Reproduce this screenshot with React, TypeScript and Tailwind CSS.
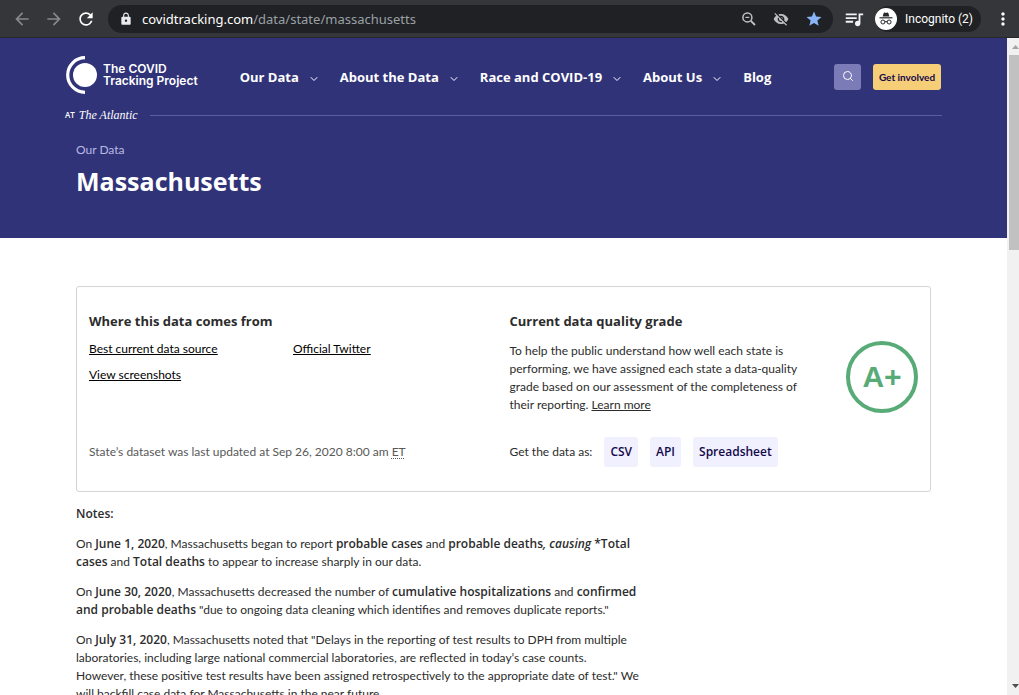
import type { ReactNode } from "react";
import {
  MdArrowBack,
  MdArrowForward,
  MdRefresh,
  MdLock,
  MdStar,
  MdMoreVert,
  MdVisibilityOff,
  MdQueueMusic,
} from "react-icons/md";
import { ChevronDown, Search } from "lucide-react";

function IncognitoIcon() {
  return (
    <svg viewBox="0 0 22 22" className="size-[22px] shrink-0" aria-hidden="true">
      <circle cx="11" cy="11" r="11" fill="#fff" />
      <path d="M7.6 8.6 8.7 5.1q.3-.8 1.1-.5l1.2.4 1.2-.4q.8-.3 1.1.5l1.1 3.5z" fill="#27282b" />
      <rect x="4.5" y="9.2" width="13" height="1.2" fill="#27282b" />
      <g fill="none" stroke="#27282b" strokeWidth="1">
        <circle cx="7.9" cy="14" r="2" />
        <circle cx="14.1" cy="14" r="2" />
        <path d="M9.9 13.9q1.1-.7 2.2 0" />
      </g>
    </svg>
  );
}

function ZoomOutIcon() {
  return (
    <svg viewBox="0 0 16 16" className="size-4" fill="none" stroke="currentColor" aria-hidden="true">
      <circle cx="6.4" cy="6.4" r="4.5" strokeWidth="1.5" />
      <path d="M9.8 9.8 14 14" strokeWidth="1.9" />
      <path d="M4.4 6.4h4" strokeWidth="1.2" />
    </svg>
  );
}

function BrowserBar() {
  return (
    <div className="flex h-[38px] shrink-0 items-center border-b border-[#28282c] bg-[#35363a] pr-1.5 pl-3 text-white">
      <button type="button" aria-label="Back" className="mr-3 text-[#87888b]">
        <MdArrowBack size={20} />
      </button>
      <button type="button" aria-label="Forward" className="mr-3 text-[#87888b]">
        <MdArrowForward size={20} />
      </button>
      <button type="button" aria-label="Reload" className="mr-3">
        <MdRefresh size={20} />
      </button>
      <div className="flex h-7 flex-1 items-center rounded-full bg-[#202124] pr-2.5 pl-[11px]">
        <MdLock size={14} className="mr-[9px] shrink-0 text-[#e8eaed]" />
        <span className="flex-1 font-['Noto_Sans',sans-serif] text-[13px] text-[#9aa0a6]">
          <span className="text-white">covidtracking.com</span>/data/state/massachusetts
        </span>
        <div className="flex items-center gap-4 text-[#bdc1c6]">
          <button type="button" aria-label="Zoom">
            <ZoomOutIcon />
          </button>
          <button type="button" aria-label="Third-party cookies blocked">
            <MdVisibilityOff size={16} />
          </button>
          <button type="button" aria-label="Bookmark this tab" className="text-[#8ab4f8]">
            <MdStar size={18} />
          </button>
        </div>
      </div>
      <button type="button" aria-label="Media controls" className="mr-2.5 ml-2.5 text-[#f1f3f4]">
        <MdQueueMusic size={22} />
      </button>
      <div className="mr-3 flex h-[26px] items-center gap-2 rounded-full bg-[#202124] pr-2">
        <IncognitoIcon />
        <span className="font-['Roboto',sans-serif] text-[12px] whitespace-nowrap">Incognito (2)</span>
      </div>
      <button type="button" aria-label="Menu">
        <MdMoreVert size={20} />
      </button>
    </div>
  );
}

function Logo() {
  return (
    <a href="#home" className="flex items-center gap-1.5">
      <svg viewBox="0 0 32 38" className="h-[38px] w-8" aria-hidden="true">
        <circle cx="20" cy="19" r="12" fill="#fff" />
        <path d="M20 1.7A17.3 17.3 0 0 0 20 36.3" fill="none" stroke="#fff" strokeWidth="3.2" />
      </svg>
      <span className="font-['Inter',sans-serif] text-[12px] leading-3 font-semibold whitespace-nowrap text-white">
        The COVID
        <br />
        Tracking Project
      </span>
    </a>
  );
}

const navItems = [
  { label: "Our Data", menu: true },
  { label: "About the Data", menu: true },
  { label: "Race and COVID-19", menu: true },
  { label: "About Us", menu: true },
  { label: "Blog", menu: false },
];

function SiteHeader() {
  return (
    <header className="h-[200px] bg-[#313379] font-['Open_Sans',sans-serif] text-white">
      <div className="px-[65px] pt-[18px]">
        <div className="flex items-center">
          <Logo />
          <nav className="ml-[42px] flex items-center gap-5 pt-1 text-[13px] font-bold whitespace-nowrap">
            {navItems.map((item) =>
              item.menu ? (
                <button key={item.label} type="button" className="flex items-center gap-[9px]">
                  {item.label}
                  <ChevronDown size={12} strokeWidth={2} className="mt-1" />
                </button>
              ) : (
                <a key={item.label} href="#blog">
                  {item.label}
                </a>
              ),
            )}
          </nav>
          <div className="mr-px ml-auto flex items-center gap-3 pt-1">
            <button
              type="button"
              aria-label="Search"
              className="flex h-[26px] w-[27px] items-center justify-center rounded-[3px] bg-[#7b7bb8] pb-0.5"
            >
              <Search size={12} strokeWidth={2} />
            </button>
            <a
              href="#get-involved"
              className="flex h-[26px] w-[68px] items-center justify-center rounded-[3px] bg-[#f6ce78] font-['Lato',sans-serif] text-[10px] font-bold whitespace-nowrap text-[#13094a]"
            >
              Get involved
            </a>
          </div>
        </div>
        <div className="mt-3 flex h-[18px] items-center">
          <span className="text-[8px] font-semibold">AT</span>
          <span className="ml-1 font-['Liberation_Serif',serif] text-[12px] italic">The Atlantic</span>
          <span className="ml-3 h-px flex-1 bg-[#5b5d9c]" />
        </div>
      </div>
      <div className="px-[76px] pt-[17px]">
        <a href="#data" className="block font-['Lato',sans-serif] text-[12px] leading-[18px] text-[#b9b9e3]">
          Our Data
        </a>
        <h1 className="mt-1 text-[25px] leading-9 font-bold">Massachusetts</h1>
      </div>
    </header>
  );
}

function Strong({ children }: { children: ReactNode }) {
  return <b className="font-['Open_Sans',sans-serif] font-semibold">{children}</b>;
}

function CardTitle({ children }: { children: ReactNode }) {
  return <h2 className="font-['Open_Sans',sans-serif] text-[13px] leading-[18px] font-bold">{children}</h2>;
}

function DataLink({ children }: { children: ReactNode }) {
  return (
    <a
      href="#download"
      className="flex h-[30px] items-center rounded-[3px] bg-[#f1f0ff] px-1.5 font-['Open_Sans',sans-serif] font-semibold text-[#13094a]"
    >
      {children}
    </a>
  );
}

function StateSummary() {
  return (
    <section className="grid h-[206px] grid-cols-2 rounded-[3px] border border-[#d3d5d3] px-3 pt-[25px] pb-6">
      <div className="flex flex-col">
        <CardTitle>Where this data comes from</CardTitle>
        <div className="mt-2.5 grid grid-cols-[204px_1fr] gap-y-2 text-black underline underline-offset-1">
          <a href="#source">Best current data source</a>
          <a href="#twitter">Official Twitter</a>
          <a href="#screenshots">View screenshots</a>
        </div>
        <p className="mt-auto flex h-[30px] items-center text-[#585858]">
          <span>
            State’s dataset was last updated at Sep 26, 2020 8:00 am{" "}
            <abbr title="Eastern Time" className="underline decoration-dotted underline-offset-2">
              ET
            </abbr>
          </span>
        </p>
      </div>
      <div className="flex flex-col pl-1.5">
        <CardTitle>Current data quality grade</CardTitle>
        <div className="mt-3 flex justify-between">
          <p className="w-[300px]">
            To help the public understand how well each state is performing, we have assigned each state a
            data-quality grade based on our assessment of the completeness of their reporting.{" "}
            <a href="#grades" className="underline underline-offset-1">
              Learn more
            </a>
          </p>
          <div className="-mt-px flex size-[72px] shrink-0 items-center justify-center rounded-full border-4 border-[#58ab77] font-['Liberation_Sans',sans-serif] text-[30px] font-bold text-[#58ab77]">
            A+
          </div>
        </div>
        <div className="mt-auto flex items-center gap-3">
          <span>Get the data as:</span>
          <DataLink>CSV</DataLink>
          <DataLink>API</DataLink>
          <DataLink>Spreadsheet</DataLink>
        </div>
      </div>
    </section>
  );
}

function Notes() {
  return (
    <section className="mt-[13px] flex max-w-[572px] flex-col gap-3">
      <p>
        <Strong>Notes:</Strong>
      </p>
      <p>
        On <Strong>June 1, 2020</Strong>, Massachusetts began to report <Strong>probable cases</Strong> and{" "}
        <Strong>
          probable deaths<i>, causing</i> *Total
          <br />
          cases
        </Strong>{" "}
        and <Strong>Total deaths</Strong> to appear to increase sharply in our data.
      </p>
      <p>
        On <Strong>June 30, 2020</Strong>, Massachusetts decreased the number of{" "}
        <Strong>cumulative hospitalizations</Strong> and{" "}
        <Strong>
          confirmed
          <br />
          and probable deaths
        </Strong>{" "}
        "due to ongoing data cleaning which identifies and removes duplicate reports."
      </p>
      <p>
        On <Strong>July 31, 2020</Strong>, Massachusetts noted that "Delays in the reporting of test results to DPH
        from multiple
        <br />
        laboratories, including large national commercial laboratories, are reflected in today’s case counts.
        <br />
        However, these positive test results have been assigned retrospectively to the appropriate date of test." We
        <br />
        will backfill case data for Massachusetts in the near future.
      </p>
    </section>
  );
}

function ScrollTrack() {
  return (
    <div className="flex w-3 shrink-0 flex-col items-center bg-[#f1f1f1]" aria-hidden="true">
      <svg viewBox="0 0 12 17" className="h-[17px] w-3">
        <path d="M5 11 8.5 7 12 11z" fill="#a3a3a3" />
      </svg>
      <div className="h-[195px] w-full border-l-2 border-[#f1f1f1] bg-[#c1c1c1]" />
      <svg viewBox="0 0 12 17" className="mt-auto h-[17px] w-3">
        <path d="M5 6 8.5 10 12 6z" fill="#505050" />
      </svg>
    </div>
  );
}

export default function App() {
  return (
    <div className="flex h-screen flex-col overflow-hidden bg-white font-['Lato',sans-serif] text-[12px] leading-[18px] text-[#2c2c2c]">
      <BrowserBar />
      <div className="flex min-h-0 flex-1">
        <div className="min-w-0 flex-1 overflow-hidden">
          <SiteHeader />
          <main className="px-[76px] pt-12">
            <StateSummary />
            <Notes />
          </main>
        </div>
        <ScrollTrack />
      </div>
    </div>
  );
}
